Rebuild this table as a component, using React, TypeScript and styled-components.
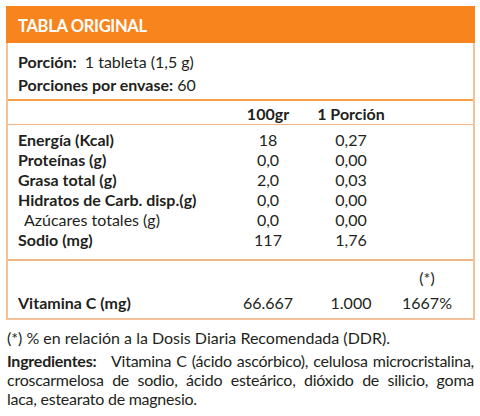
import React from "react";
import styled, { createGlobalStyle } from "styled-components";

const GlobalStyle = createGlobalStyle`
  html, body {
    margin: 0;
    padding: 0;
    background: #ffffff;
  }
  body {
    font-family: 'Lato', 'Liberation Sans', sans-serif;
    color: #231f20;
  }
`;

const Page = styled.div`
  width: 480px;
  padding: 6px 5px 0 6px;
  box-sizing: border-box;
`;

const Card = styled.div`
  border: 2px solid #f2c39a;
  border-top: none;
`;

const Header = styled.div`
  height: 37px;
  margin: 0 -2px;
  padding-left: 12px;
  background: #f7841c;
  color: #ffffff;
  font-weight: 700;
  font-size: 16.5px;
  letter-spacing: -0.3px;
  line-height: 40px;
`;

const Serving = styled.div`
  padding: 7px 0 3px 10px;
  font-size: 16px;
  line-height: 23px;
  border-bottom: 2px solid #f6a04a;
`;

const Bold = styled.span`
  font-weight: 700;
`;

const Grid = styled.div`
  display: grid;
  grid-template-columns: 1fr 70px 96px 56px;
  padding: 0 18px 0 10px;
  font-size: 16px;
`;

const HeadRow = styled(Grid)`
  height: 23px;
  line-height: 25px;
  border-bottom: 1px solid #f0b585;
`;

const Rows = styled.div`
  padding: 5px 0 9px;
  border-bottom: 2px solid #f0b585;
`;

const Row = styled(Grid)`
  line-height: 20px;
`;

const Label = styled.div<{ $indent?: boolean }>`
  font-weight: ${(p) => (p.$indent ? 400 : 700)};
  padding-left: ${(p) => (p.$indent ? "6px" : "0")};
  white-space: nowrap;
`;

const Cell = styled.div<{ $bold?: boolean }>`
  text-align: center;
  font-weight: ${(p) => (p.$bold ? 700 : 400)};
  white-space: nowrap;
`;

const Vitamin = styled.div`
  padding: 0 0 1px;
`;

const VitRow = styled(Grid)<{ $note?: boolean }>`
  box-sizing: border-box;
  height: 28px;
  line-height: 28px;
  padding-top: ${(p) => (p.$note ? "3px" : "0")};
`;

const Notes = styled.div`
  padding: 8px 1px 0 1px;
  font-size: 16px;
  line-height: 19px;
`;

const Note = styled.p`
  margin: 0 0 4px;
`;

const Ingredients = styled.div`
  letter-spacing: -0.25px;
`;

const IngLine = styled.span<{ $last?: boolean }>`
  display: block;
  white-space: nowrap;
  text-align: justify;
  text-align-last: ${(p) => (p.$last ? "left" : "justify")};
`;

const nutrients = [
  { label: "Energía (Kcal)", a: "18", b: "0,27" },
  { label: "Proteínas (g)", a: "0,0", b: "0,00" },
  { label: "Grasa total (g)", a: "2,0", b: "0,03" },
  { label: "Hidratos de Carb. disp.(g)", a: "0,0", b: "0,00" },
  { label: "Azúcares totales (g)", a: "0,0", b: "0,00", indent: true },
  { label: "Sodio (mg)", a: "117", b: "1,76" },
];

export default function App() {
  return (
    <Page>
      <GlobalStyle />
      <Card>
        <Header>TABLA ORIGINAL</Header>
        <Serving>
          <div>
            <Bold>Porción:</Bold>&nbsp; 1 tableta (1,5 g)
          </div>
          <div>
            <Bold>Porciones por envase:</Bold> 60
          </div>
        </Serving>
        <HeadRow>
          <div />
          <Cell $bold>100gr</Cell>
          <Cell $bold>1 Porción</Cell>
          <div />
        </HeadRow>
        <Rows>
          {nutrients.map((n) => (
            <Row key={n.label}>
              <Label $indent={n.indent}>{n.label}</Label>
              <Cell>{n.a}</Cell>
              <Cell>{n.b}</Cell>
              <div />
            </Row>
          ))}
        </Rows>
        <Vitamin>
          <VitRow $note>
            <div />
            <div />
            <div />
            <Cell>(*)</Cell>
          </VitRow>
          <VitRow>
            <Label>Vitamina C (mg)</Label>
            <Cell>66.667</Cell>
            <Cell>1.000</Cell>
            <Cell>1667%</Cell>
          </VitRow>
        </Vitamin>
      </Card>
      <Notes>
        <Note>(*) % en relación a la Dosis Diaria Recomendada (DDR).</Note>
        <Ingredients>
          <IngLine>
            <Bold>Ingredientes:</Bold>&nbsp;&nbsp; Vitamina C (ácido ascórbico), celulosa microcristalina,
          </IngLine>
          <IngLine>
            croscarmelosa de sodio, ácido esteárico, dióxido de silicio, goma
          </IngLine>
          <IngLine $last>laca, estearato de magnesio.</IngLine>
        </Ingredients>
      </Notes>
    </Page>
  );
}
